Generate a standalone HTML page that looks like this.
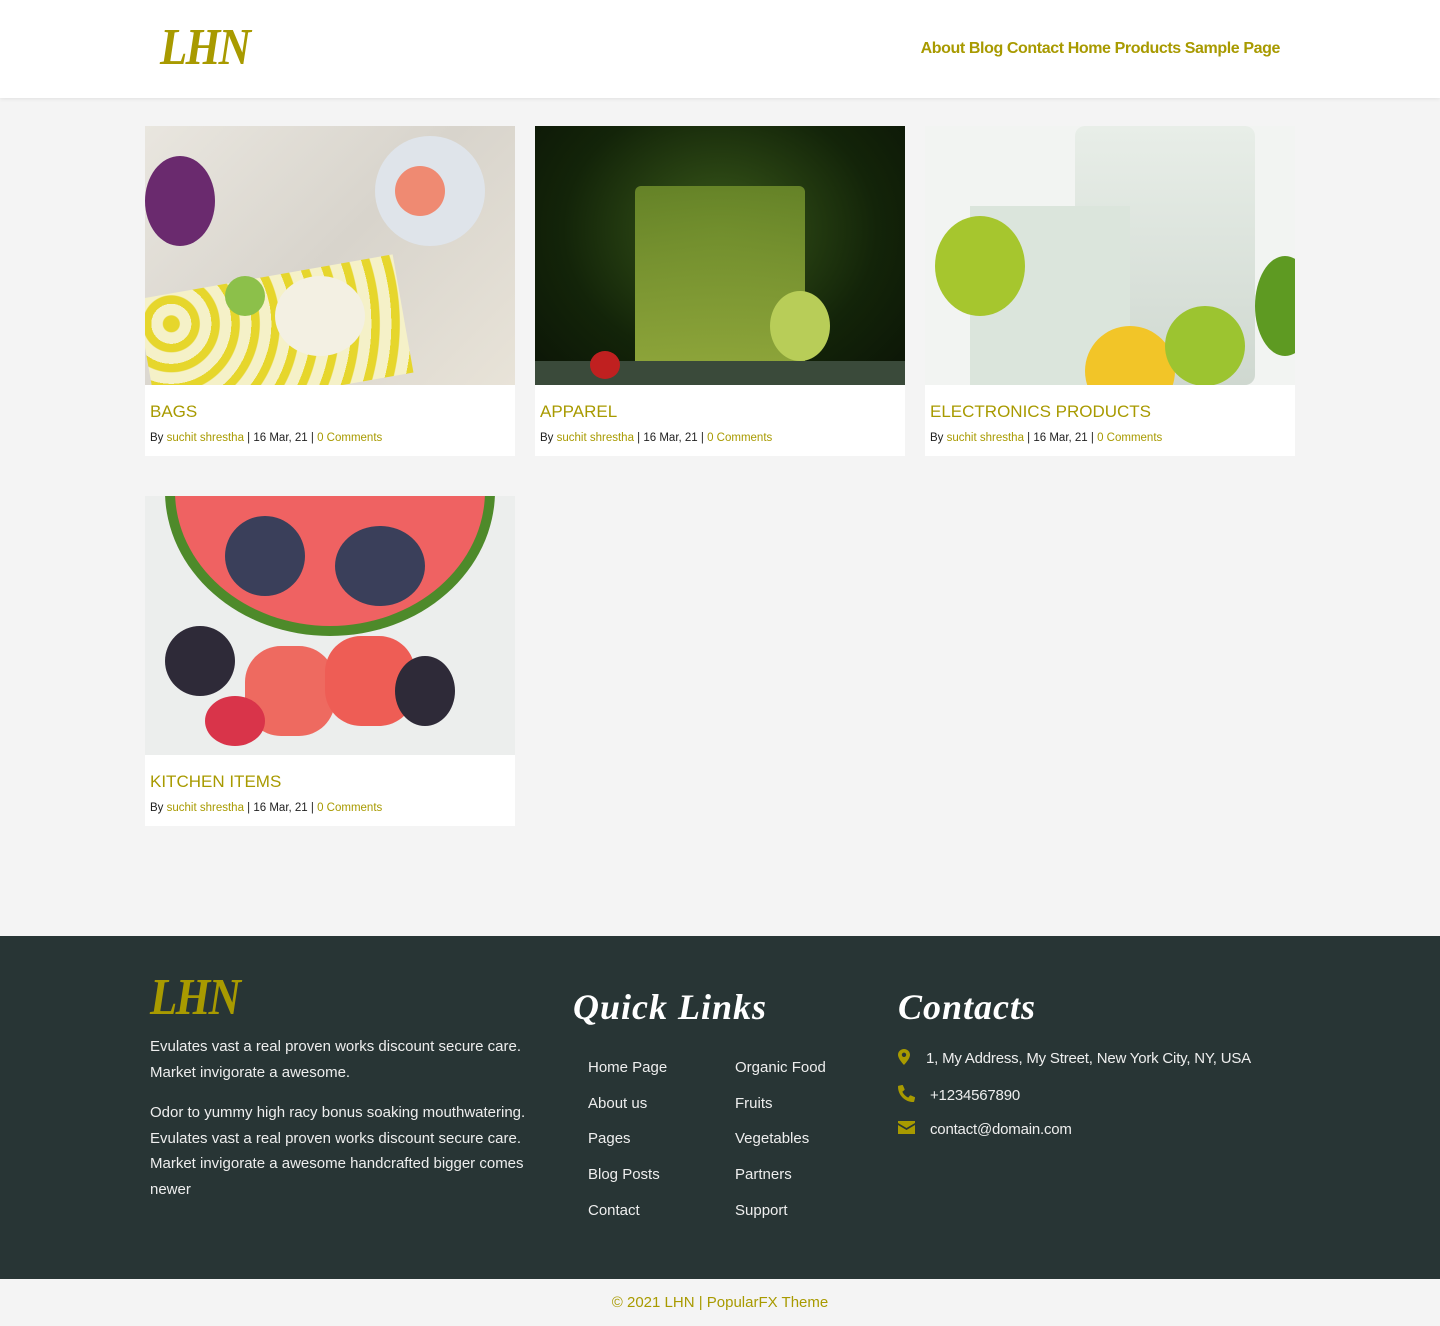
<!DOCTYPE html>
<html><head><meta charset="utf-8"><style>
*{margin:0;padding:0;box-sizing:border-box}
body{width:1440px;height:1326px;background:#f4f4f4;font-family:"Liberation Sans",sans-serif;position:relative;overflow:hidden}
header{position:absolute;top:0;left:0;width:1440px;height:98px;background:#fff;box-shadow:0 1px 4px rgba(0,0,0,.08)}
.logo{position:absolute;font-family:"Liberation Serif",serif;font-style:italic;font-weight:bold;color:#a89a00;letter-spacing:-2px;transform:scaleX(.86);transform-origin:left}
nav{position:absolute;right:160px;top:40px;font-size:16px;font-weight:bold;color:#a89a00;letter-spacing:-.4px}
.card{position:absolute;width:370px;height:330px;background:#fff}
.img{height:259px;position:relative;overflow:hidden}
.card h3{font-weight:normal;font-size:17px;color:#a89a00;margin:17px 0 0 5px;height:22px}
.meta{font-size:11.5px;color:#222;margin:8px 0 0 5px}
.meta span{color:#a89a00}
footer{position:absolute;top:936px;left:0;width:1440px;height:343px;background:#283535;color:#eee}
footer p{font-size:15px;line-height:25.5px}
.h{position:absolute;font-family:"Liberation Serif",serif;font-style:italic;font-weight:bold;font-size:36px;color:#fff;top:50px;letter-spacing:1px}
.ql{position:absolute;font-size:15px}
.ql div{height:35.7px}
.bottom{position:absolute;top:1279px;width:1440px;height:47px;text-align:center;line-height:47px;font-size:15px;color:#a89a00}
</style></head><body>
<header>
<div class="logo" style="left:160px;top:18px;font-size:52px">LHN</div>
<nav>About Blog Contact Home Products Sample Page</nav>
</header>

<div class="card" style="left:145px;top:126px"><div class="img" style="background:linear-gradient(135deg,#e9e6df,#d8d4cc 50%,#e8e3d8)">
<div style="position:absolute;left:0;top:150px;width:260px;height:120px;background:repeating-radial-gradient(circle at 30px 30px,#e6d62c 0 8px,#f5f1c8 9px 20px);transform:rotate(-10deg)"></div>
<div style="position:absolute;left:0;top:30px;width:70px;height:90px;border-radius:50%;background:#6a2a6e"></div>
<div style="position:absolute;left:230px;top:10px;width:110px;height:110px;border-radius:50%;background:#dfe4ea"></div>
<div style="position:absolute;left:250px;top:40px;width:50px;height:50px;border-radius:50%;background:#ef8a72"></div>
<div style="position:absolute;left:130px;top:150px;width:90px;height:80px;border-radius:50%;background:#f3f0e3"></div>
<div style="position:absolute;left:80px;top:150px;width:40px;height:40px;border-radius:50%;background:#8cc04a"></div>
</div><h3>BAGS</h3><div class="meta">By <span>suchit shrestha</span> | 16 Mar, 21 | <span>0 Comments</span></div></div>

<div class="card" style="left:535px;top:126px"><div class="img" style="background:radial-gradient(ellipse at 50% 40%,#3a5a1a,#132409 60%,#0b1406)">
<div style="position:absolute;left:100px;top:60px;width:170px;height:185px;background:linear-gradient(#6c8a2a,#9cb440);opacity:.9;border-radius:6px"></div>
<div style="position:absolute;left:235px;top:165px;width:60px;height:70px;border-radius:50%;background:#b8cd58"></div>
<div style="position:absolute;left:0;top:235px;width:370px;height:24px;background:#3a4a3a"></div>
<div style="position:absolute;left:55px;top:225px;width:30px;height:28px;border-radius:50%;background:#c02020"></div>
</div><h3>APPAREL</h3><div class="meta">By <span>suchit shrestha</span> | 16 Mar, 21 | <span>0 Comments</span></div></div>

<div class="card" style="left:925px;top:126px"><div class="img" style="background:#f2f4f2">
<div style="position:absolute;left:150px;top:0;width:180px;height:259px;background:linear-gradient(#e8eee8,#cfd8d0);border-radius:10px"></div>
<div style="position:absolute;left:45px;top:80px;width:160px;height:179px;background:#dbe5dc"></div>
<div style="position:absolute;left:10px;top:90px;width:90px;height:100px;border-radius:50%;background:#a6c62e"></div>
<div style="position:absolute;left:160px;top:200px;width:90px;height:90px;border-radius:50%;background:#f2c528"></div>
<div style="position:absolute;left:240px;top:180px;width:80px;height:80px;border-radius:50%;background:#9cc430"></div>
<div style="position:absolute;left:330px;top:130px;width:60px;height:100px;border-radius:50%;background:#5e9a22"></div>
</div><h3>ELECTRONICS PRODUCTS</h3><div class="meta">By <span>suchit shrestha</span> | 16 Mar, 21 | <span>0 Comments</span></div></div>

<div class="card" style="left:145px;top:496px"><div class="img" style="background:#eceeed">
<div style="position:absolute;left:20px;top:-150px;width:330px;height:290px;border-radius:50%;background:#4e8a2a"></div>
<div style="position:absolute;left:30px;top:-140px;width:310px;height:270px;border-radius:50%;background:#ef6262"></div>
<div style="position:absolute;left:80px;top:20px;width:80px;height:80px;border-radius:50%;background:#3a3f5a"></div>
<div style="position:absolute;left:190px;top:30px;width:90px;height:80px;border-radius:50%;background:#3a3f5a"></div>
<div style="position:absolute;left:100px;top:150px;width:90px;height:90px;border-radius:40%;background:#ee6a60"></div>
<div style="position:absolute;left:180px;top:140px;width:90px;height:90px;border-radius:40%;background:#ee5d55"></div>
<div style="position:absolute;left:20px;top:130px;width:70px;height:70px;border-radius:50%;background:#2e2a38"></div>
<div style="position:absolute;left:250px;top:160px;width:60px;height:70px;border-radius:50%;background:#2e2a38"></div>
<div style="position:absolute;left:60px;top:200px;width:60px;height:50px;border-radius:50%;background:#d9344a"></div>
</div><h3>KITCHEN ITEMS</h3><div class="meta">By <span>suchit shrestha</span> | 16 Mar, 21 | <span>0 Comments</span></div></div>

<footer>
<div class="logo" style="left:150px;top:32px;font-size:52px">LHN</div>
<div style="position:absolute;left:150px;top:98px;width:400px">
<p>Evulates vast a real proven works discount secure care. Market invigorate a awesome.</p>
<p style="margin-top:15px">Odor to yummy high racy bonus soaking mouthwatering. Evulates vast a real proven works discount secure care. Market invigorate a awesome handcrafted bigger comes newer</p>
</div>
<div class="h" style="left:573px">Quick Links</div>
<div class="ql" style="left:588px;top:123px"><div>Home Page</div><div>About us</div><div>Pages</div><div>Blog Posts</div><div>Contact</div></div>
<div class="ql" style="left:735px;top:123px"><div>Organic Food</div><div>Fruits</div><div>Vegetables</div><div>Partners</div><div>Support</div></div>
<div class="h" style="left:898px">Contacts</div>
<div class="ql" style="left:898px;top:113px;line-height:20px;letter-spacing:-.2px">
<div style="height:36px"><svg width="12" height="16" viewBox="0 0 12 16" style="vertical-align:-2px"><path d="M6 0C2.7 0 0 2.6 0 5.8 0 10 6 16 6 16s6-6 6-10.2C12 2.6 9.3 0 6 0zm0 8a2.2 2.2 0 110-4.4A2.2 2.2 0 016 8z" fill="#a89a00"/></svg><span style="margin-left:16px">1, My Address, My Street, New York City, NY, USA</span></div>
<div style="height:35px"><svg width="17" height="17" viewBox="0 0 512 512" style="vertical-align:-2px"><path fill="#a89a00" d="M497 361l-112-48a24 24 0 00-28 7l-50 61A371 371 0 01130 204l61-50a24 24 0 007-28L150 14a24 24 0 00-28-14L18 24A24 24 0 000 48c0 256 208 464 464 464a24 24 0 0024-18l24-104a24 24 0 00-15-29z"/></svg><span style="margin-left:15px">+1234567890</span></div>
<div><svg width="17" height="13" viewBox="0 0 17 13" style="vertical-align:0"><path d="M0 0h17v2L8.5 7 0 2z M0 4l8.5 5L17 4v9H0z" fill="#a89a00"/></svg><span style="margin-left:15px">contact@domain.com</span></div>
</div>
</footer>
<div class="bottom">© 2021 LHN | PopularFX Theme</div>
</body></html>
